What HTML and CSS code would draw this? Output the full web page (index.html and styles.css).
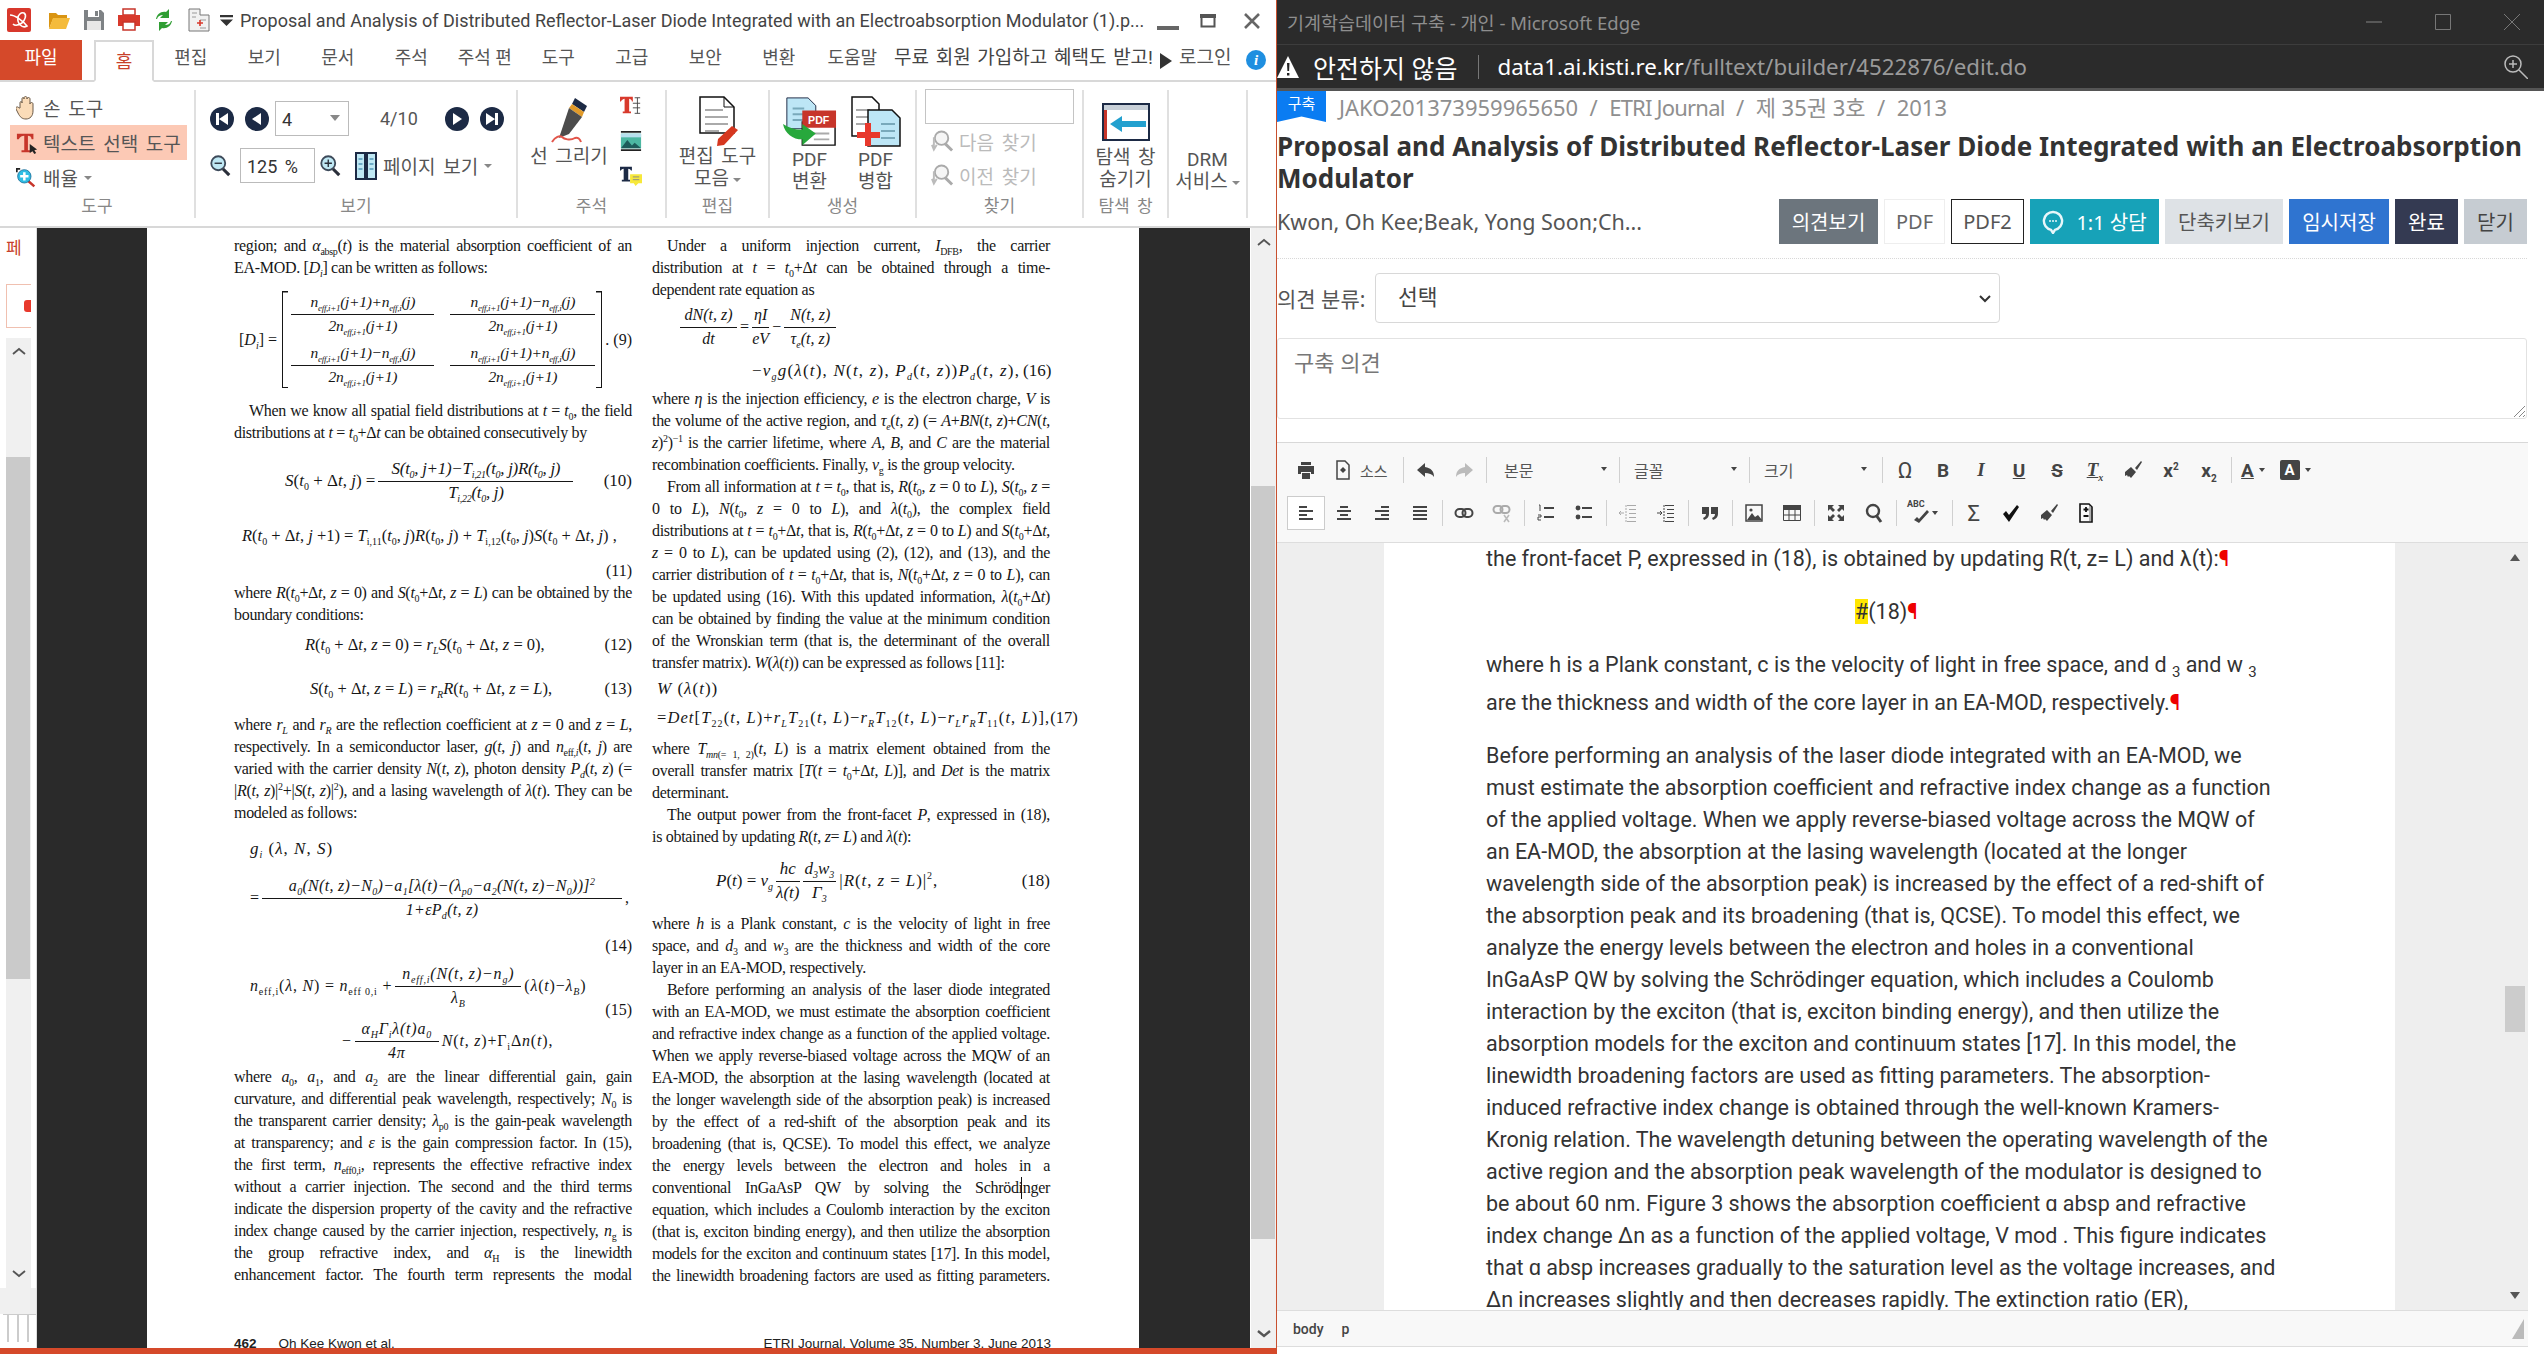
FILE: index.html
```html
<!DOCTYPE html>
<html lang="ko">
    <head>
        <meta charset="utf-8">
        <title>Proposal and Analysis of Distributed Reflector-Laser Diode</title>
        <link rel="stylesheet" href="styles.css">
    </head>
    <body>
        <svg class="defs">
            <symbol id="i-first" viewBox="0 0 24 24"><circle cx="12" cy="12" r="12" fill="#1c2a45"/><path d="M6 6h3v12H6zM18 6v12l-9-6z" fill="#fff"/></symbol>
            <symbol id="i-prev" viewBox="0 0 24 24"><circle cx="12" cy="12" r="12" fill="#1c2a45"/><path d="M16 6v12l-9-6z" fill="#fff"/></symbol>
            <symbol id="i-next" viewBox="0 0 24 24"><circle cx="12" cy="12" r="12" fill="#1c2a45"/><path d="M8 6v12l9-6z" fill="#fff"/></symbol>
            <symbol id="i-last" viewBox="0 0 24 24"><circle cx="12" cy="12" r="12" fill="#1c2a45"/><path d="M15 6h3v12h-3zM6 6v12l9-6z" fill="#fff"/></symbol>
            <symbol id="i-lens" viewBox="0 0 24 24"><path d="M14 15l7 7" stroke="#2a2f3a" stroke-width="3.4"/><circle cx="9" cy="9" r="7.6" fill="#bfe8f4" stroke="#3d4a5a" stroke-width="2"/></symbol>
            <symbol id="i-lens-out" viewBox="0 0 24 24"><use href="#i-lens"/><path d="M5 9h8" stroke="#2a2f3a" stroke-width="1.500"/></symbol>
            <symbol id="i-lens-in" viewBox="0 0 24 24"><use href="#i-lens"/><path d="M5 9h8M9 5v8" stroke="#2a2f3a" stroke-width="1.500"/></symbol>
            <symbol id="i-findg" viewBox="0 0 24 24"><path d="M15 15l7 7" stroke="#aaa" stroke-width="3"/><circle cx="11" cy="9" r="7" fill="#f5f5f5" stroke="#aaa" stroke-width="2"/><path d="M3 8v12M1 16l2 5 3-5" stroke="#bbb" stroke-width="2" fill="none"/></symbol>

            <symbol id="t-print" viewBox="0 0 20 20"><path d="M5 2h10v3H5zM2 6h16v8h-3v-2H5v2H2zM6 13h8v6H6z" fill="#444"/></symbol>
            <symbol id="t-src" viewBox="0 0 20 20"><path d="M4 1h8l4 4v14H4z" fill="none" stroke="#444" stroke-width="1.5"/><path d="M10 7l3 3-3 3-3-3z" fill="#444"/></symbol>
            <symbol id="t-undo" viewBox="0 0 20 20"><path d="M9 3L1 10l8 7v-4c4 0 7 1 9 4 0-6-3-9-9-10z" fill="#444"/></symbol>
            <symbol id="t-redo" viewBox="0 0 20 20"><path d="M11 3l8 7-8 7v-4c-4 0-7 1-9 4 0-6 3-9 9-10z" fill="#bbb"/></symbol>
            <symbol id="t-brush" viewBox="0 0 20 20"><path d="M12 8l6-7 1 1-5 8zM2 12l6-5 5 5-5 6-2-2-1 1-1-2-2 1z" fill="#444"/></symbol>
            <symbol id="t-left" viewBox="0 0 20 20"><path d="M3 3h8v2H3zM3 7h14v2H3zM3 11h8v2H3zM3 15h14v2H3z" fill="#444"/></symbol>
            <symbol id="t-center" viewBox="0 0 20 20"><path d="M6 3h8v2H6zM3 7h14v2H3zM6 11h8v2H6zM3 15h14v2H3z" fill="#444"/></symbol>
            <symbol id="t-right" viewBox="0 0 20 20"><path d="M9 3h8v2H9zM3 7h14v2H3zM9 11h8v2H9zM3 15h14v2H3z" fill="#444"/></symbol>
            <symbol id="t-just" viewBox="0 0 20 20"><path d="M3 3h14v2H3zM3 7h14v2H3zM3 11h14v2H3zM3 15h14v2H3z" fill="#444"/></symbol>
            <symbol id="t-link" viewBox="0 0 20 20"><rect x="1.5" y="6" width="10" height="8" rx="4" fill="none" stroke="#444" stroke-width="2"/><rect x="8.5" y="6" width="10" height="8" rx="4" fill="none" stroke="#444" stroke-width="2"/></symbol>
            <symbol id="t-unlink" viewBox="0 0 20 20"><rect x="1.5" y="3" width="9" height="7" rx="3.5" fill="none" stroke="#aaa" stroke-width="2"/><rect x="8.5" y="3" width="9" height="7" rx="3.5" fill="none" stroke="#aaa" stroke-width="2"/><path d="M12 12l5 7M17 12l-5 7" stroke="#bbb" stroke-width="1.6"/></symbol>
            <symbol id="t-ol" viewBox="0 0 20 20"><path d="M8 4h10v2H8zM8 13h10v2H8z" fill="#444"/><path d="M3 2h1v6M2 12h3v2H2v3h3" stroke="#444" fill="none"/></symbol>
            <symbol id="t-ul" viewBox="0 0 20 20"><circle cx="4" cy="5" r="2.4" fill="#444"/><circle cx="4" cy="14" r="2.4" fill="#444"/><path d="M8 4h10v2H8zM8 13h10v2H8z" fill="#444"/></symbol>
            <symbol id="t-out" viewBox="0 0 20 20"><path d="M9 2h9v1H9zM11 6h7v1h-7zM11 10h7v1h-7zM11 14h7v1h-7zM9 18h9v1H9z" fill="#aaa"/><path d="M8 2v17" stroke="#aaa" stroke-dasharray="2 1"/><path d="M1 10h5M3 8l-2 2 2 2" stroke="#aaa" fill="none"/></symbol>
            <symbol id="t-ind" viewBox="0 0 20 20"><path d="M9 2h9v1H9zM11 6h7v1h-7zM11 10h7v1h-7zM11 14h7v1h-7zM9 18h9v1H9z" fill="#444"/><path d="M8 2v17" stroke="#444" stroke-dasharray="2 1"/><path d="M1 10h5M4 8l2 2-2 2" stroke="#444" fill="none"/></symbol>
            <symbol id="t-quote" viewBox="0 0 20 20"><path d="M2 4h7v7c0 3-2 5-5 6l-1-2c2-1 3-2 3-4H2zM11 4h7v7c0 3-2 5-5 6l-1-2c2-1 3-2 3-4h-4z" fill="#444"/></symbol>
            <symbol id="t-img" viewBox="0 0 20 20"><rect x="2" y="2" width="16" height="16" fill="none" stroke="#444" stroke-width="1.5"/><path d="M3 17l5-7 3 4 3-2 4 5z" fill="#444"/><circle cx="7" cy="7" r="1.6" fill="#444"/></symbol>
            <symbol id="t-table" viewBox="0 0 20 20"><path d="M1 2h18v5H1z" fill="#444"/><path d="M1.500 2.500h17v15h-17zM1 12h18M7 7v11M13 7v11" fill="none" stroke="#444"/></symbol>
            <symbol id="t-max" viewBox="0 0 20 20"><path d="M2 2h6L6 4l3 3-2 2-3-3-2 2zM18 2v6l-2-2-3 3-2-2 3-3-2-2zM2 18v-6l2 2 3-3 2 2-3 3 2 2zM18 18h-6l2-2-3-3 2-2 3 3 2-2z" fill="#444"/></symbol>
            <symbol id="t-find" viewBox="0 0 20 20"><circle cx="9" cy="8" r="6" fill="none" stroke="#444" stroke-width="2.400"/><path d="M12 12l5 7" stroke="#444" stroke-width="3"/></symbol>
            <symbol id="t-check" viewBox="0 0 20 20"><path d="M2 11l3-3 3 4 8-10 2 2-10 15z" fill="#111"/></symbol>
            <symbol id="t-spell" viewBox="0 0 20 20"><path d="M4 17l3-3 2 2 8-9 2 2-10 11z" fill="#444"/></symbol>
            <symbol id="t-docpm" viewBox="0 0 20 20"><path d="M4 1h9l3 3v15H4z" fill="none" stroke="#111" stroke-width="1.6"/><path d="M10 4v5M7.500 6.500h5M7.500 13h5" stroke="#111" stroke-width="1.800"/><path d="M14 3v15" stroke="#999" stroke-width="1.500"/></symbol>
        </svg>

        <div class="desktop">
            <section class="pdf-win">
                <header class="pdf-title">
                    <svg class="ti-logo" viewBox="0 0 24 24"><rect width="24" height="24" rx="2" fill="#d8382c"/><path d="M3 7c5 0 13 6 17 11-5 3-10-3-9-8 0-3 3-6 6-5 3 2 1 7-2 10-3 2-7 3-9 1" fill="none" stroke="#fff" stroke-width="1.600"/></svg>
                    <svg class="ti-ic" viewBox="0 0 24 24"><path d="M2 5h7l2 2h9v4H6l-4 10z" fill="#d99412"/><path d="M6 10h17l-4 11H2z" fill="#f4bb3c"/></svg>
                    <svg class="ti-ic" viewBox="0 0 24 24"><path d="M2 2h17l3 3v17H2z" fill="#7e8285"/><path d="M6 2h11v7H6z" fill="#fff"/><path d="M13 3h3v5h-3z" fill="#7e8285"/><path d="M5 13h14v9H5z" fill="#e7e7e7"/></svg>
                    <svg class="ti-ic" viewBox="0 0 24 24"><path d="M6 1h12v6H6z" fill="#fff" stroke="#c7352a" stroke-width="1.500"/><path d="M1 7h22v11H1z" fill="#d8392c"/><path d="M6 14h12v8H6z" fill="#fff" stroke="#c7352a" stroke-width="1.500"/></svg>
                    <svg class="ti-ic" viewBox="0 0 24 24"><path d="M4 11c1-5 5-8 10-7l3-3v9h-9l3-3c-3 0-5 1-6 4z" fill="#2f9e33"/><path d="M20 13c-1 5-5 8-10 7l-3 3v-9h9l-3 3c3 0 5-1 6-4z" fill="#2f9e33"/></svg>
                    <svg class="ti-ic" viewBox="0 0 24 24"><path d="M2 1h11v6h9v16H2z" fill="#f1f1f1" stroke="#777"/><path d="M5 5h5M5 9h4M13 12h6M13 20h6" stroke="#999"/><path d="M10 15h6M13 12v6" stroke="#d8392c" stroke-width="1.600"/></svg>
                    <svg class="ti-drop" viewBox="0 0 12 12"><path d="M0 1h12v2H0zM0 5h12L6 11z" fill="#333"/></svg>
                    <span class="pdf-name">Proposal and Analysis of Distributed Reflector-Laser Diode Integrated with an Electroabsorption Modulator (1).p...</span>
                    <svg class="wc" viewBox="0 0 22 16"><path d="M0 11h22v4H0z" fill="#666"/></svg>
                    <svg class="wc wc-max" viewBox="0 0 16 14"><path d="M1.500 1.500h13v11h-13z" fill="none" stroke="#555" stroke-width="2"/><path d="M0 0h16v4H0z" fill="#555"/></svg>
                    <svg class="wc wc-close" viewBox="0 0 16 16"><path d="M1 1l14 14M15 1L1 15" stroke="#666" stroke-width="2.600"/></svg>
                </header>

                <nav class="tabs">
                    <span class="tab-file">파일</span>
                    <span class="tab-home">홈</span>
                    <span class="tab">편집</span>
                    <span class="tab">보기</span>
                    <span class="tab">문서</span>
                    <span class="tab">주석</span>
                    <span class="tab">주석 편</span>
                    <span class="tab">도구</span>
                    <span class="tab">고급</span>
                    <span class="tab">보안</span>
                    <span class="tab">변환</span>
                    <span class="tab">도움말</span>
                    <span class="promo">무료 회원 가입하고 혜택도 받고!</span>
                    <span class="promo-arrow"></span>
                    <span class="login">로그인</span>
                    <span class="info">i</span>
                </nav>

                <div class="ribbon">
                    <div class="group g-tools">
                        <div class="g-body">
                            <div class="tool">
                                <svg class="tool-ic" viewBox="0 0 20 24"><path d="M4 12V7c0-2 2-2 2 0V3c0-2 2-2 2 0V2c0-2 3-2 3 0v1c0-2 3-2 3 0v5c0-2 3-2 3 0v7c0 5-3 8-7 8s-6-2-8-6l-2-4c-1-2 2-3 3-1z" fill="#fbdcb8" stroke="#6b5a48"/></svg>
                                <span>손 도구</span>
                            </div>
                            <div class="tool tool-on">
                                <svg class="tool-ic tool-t" viewBox="0 0 24 24"><path d="M1 2h18v6h-2c0-3-2-4-4-4v16h3v2H6v-2h3V4C7 4 4 5 3 8H1z" fill="#c7352a"/><path d="M15 13l8 6-3 1 2 3-2 1-2-3-3 2z" fill="#222"/></svg>
                                <span>텍스트 선택 도구</span>
                            </div>
                            <div class="tool">
                                <svg class="tool-ic" viewBox="0 0 24 24"><path d="M0 0h5v2H2v3H0z" fill="#222"/><path d="M14 15l8 7" stroke="#c7352a" stroke-width="3"/><circle cx="10" cy="10" r="8" fill="#2fbde4" stroke="#1c6f9a"/><path d="M10 5v10M5 10h10" stroke="#fff" stroke-width="3"/></svg>
                                <span>배율</span><b class="caret"></b>
                            </div>
                        </div>
                        <span class="g-label">도구</span>
                    </div>

                    <div class="group g-view">
                        <div class="g-body">
                            <div class="view-row">
                                <svg class="nav-btn"><use href="#i-first"/></svg>
                                <svg class="nav-btn nb2"><use href="#i-prev"/></svg>
                                <span class="box box-page">4<b class="box-caret"></b></span>
                                <span class="count">4/10</span>
                                <svg class="nav-btn"><use href="#i-next"/></svg>
                                <svg class="nav-btn nb2"><use href="#i-last"/></svg>
                            </div>
                            <div class="view-row view-row2">
                                <svg class="zoom-ic"><use href="#i-lens-out"/></svg>
                                <span class="box box-zoom">125 %</span>
                                <svg class="zoom-ic zi2"><use href="#i-lens-in"/></svg>
                                <svg class="page-ic" viewBox="0 0 22 28"><path d="M1 1h9v26H1zM12 1h9v26h-9z" fill="#bfe8f4" stroke="#1c2a45" stroke-width="2"/><path d="M3.500 7h4M3.500 12h4M3.500 17h4M14.500 7h4M14.500 12h4M14.500 17h4" stroke="#1c6f9a"/></svg>
                                <span class="page-lb">페이지 보기</span><b class="caret"></b>
                            </div>
                        </div>
                        <span class="g-label">보기</span>
                    </div>

                    <div class="group g-note">
                        <div class="g-body note-body">
                            <div class="big big-pen">
                                <svg class="pen-ic" viewBox="0 0 40 50"><path d="M26 2l12 8-3 6-12-8z" fill="#1c2a45"/><path d="M23 8l12 8-2 5-13-9z" fill="#e09a2a"/><path d="M20 12l13 9-13 17-10 4z" fill="#4c4c4c"/><path d="M3 46c3-5 8-7 10-5s8 4 13 1c3-1 5 1 6 4" fill="none" stroke="#e2554a" stroke-width="2"/></svg>
                                <span>선 그리기</span>
                            </div>
                            <div class="note-side">
                                <svg viewBox="0 0 24 22"><path d="M0 1h14v5h-1c0-2-2-3-3-3v14h2v2H3v-2h2V3C4 3 2 4 1 6H0z" fill="#d8392c"/><path d="M16 2h6M19 2v17M16 19h6M14 8h8M14 13h8" stroke="#444" fill="none"/></svg>
                                <svg viewBox="0 0 24 24"><path d="M1 2h22M1 22h22" stroke="#222" stroke-width="2"/><path d="M1 4h22v16H1z" fill="#4cb7a2"/><path d="M1 20l7-9 5 6 3-3 7 6z" fill="#1d5c5a"/><path d="M1 4h22v4H1z" fill="#b7e0ee"/></svg>
                                <svg viewBox="0 0 24 24"><path d="M0 2h13v4h-1c0-1-2-2-3-2v12h2v2H2v-2h2V4C3 4 1 5 1 6H0z" fill="#1c2a45"/><path d="M11 10h13v10h-4l-3 3-2-3h-4z" fill="#f7e83a"/><path d="M14 13h7M14 16h7" stroke="#888"/></svg>
                            </div>
                        </div>
                        <span class="g-label">주석</span>
                    </div>

                    <div class="group g-edit">
                        <div class="g-body">
                            <div class="big">
                                <svg class="big-ic" viewBox="0 0 40 50"><path d="M2 1h24l10 10v26H2z" fill="#fff" stroke="#111" stroke-width="1.500"/><path d="M26 1v10h10" fill="none" stroke="#111"/><path d="M7 14h18M7 21h23M7 28h23M7 35h14" stroke="#aaa" stroke-width="2"/><path d="M34 30l6 4-14 15-7 1 1-7z" fill="#d6371f"/></svg>
                                <span>편집 도구</span>
                                <span>모음<b class="caret"></b></span>
                            </div>
                        </div>
                        <span class="g-label">편집</span>
                    </div>

                    <div class="group g-make">
                        <div class="g-body make-body">
                            <div class="big">
                                <svg class="big-ic wide" viewBox="0 0 56 52"><path d="M4 1h22l8 8v24H4z" fill="#bde6f6" stroke="#1c2a45"/><path d="M10 12h12M10 18h14M10 24h14" stroke="#79a9bb" stroke-width="2"/><path d="M20 26h34v24H20z" fill="#fff" stroke="#111" stroke-width="1.500"/><path d="M20 14h35v18H20z" fill="#c7352a"/><text class="pdf-tag" x="37" y="28" text-anchor="middle">PDF</text><path d="M30 38h18M32 44h16" stroke="#aaa" stroke-width="2"/><path d="M0 28c2 10 10 16 20 16v6l14-12-14-10v6c-8 0-14-2-20-6z" fill="#27a83c"/></svg>
                                <span>PDF</span>
                                <span>변환</span>
                            </div>
                            <div class="big">
                                <svg class="big-ic wide" viewBox="0 0 50 52"><path d="M1 1h20l7 7v32H1z" fill="#fff" stroke="#111" stroke-width="1.500"/><path d="M5 14h14M5 21h14M5 28h10" stroke="#aaa" stroke-width="2"/><path d="M17 14h24l8 8v28H17z" fill="#bde6f6" stroke="#111" stroke-width="1.500"/><path d="M30 28h14M30 35h14M30 42h14" stroke="#79a9bb" stroke-width="2"/><path d="M14 27h6v9h9v6h-9v8h-6v-8H6v-6h8z" fill="#e8382c"/></svg>
                                <span>PDF</span>
                                <span>병합</span>
                            </div>
                        </div>
                        <span class="g-label">생성</span>
                    </div>

                    <div class="group g-find">
                        <div class="g-body">
                            <div class="find-box"></div>
                            <div class="find-row"><svg><use href="#i-findg"/></svg><span>다음 찾기</span></div>
                            <div class="find-row"><svg><use href="#i-findg"/></svg><span>이전 찾기</span></div>
                        </div>
                        <span class="g-label">찾기</span>
                    </div>

                    <div class="group g-nav">
                        <div class="g-body">
                            <div class="big big-nav">
                                <svg class="nav-ic" viewBox="0 0 48 38"><path d="M1 1h46v36H1z" fill="#fff" stroke="#1c2a45" stroke-width="2"/><path d="M2 2h44v5H2z" fill="#c8d0d8"/><path d="M2 7h3v29H2z" fill="#c7352a"/><path d="M8 21l12-8v5h24v6H20v5z" fill="#22a0cf"/></svg>
                                <span>탐색 창</span>
                                <span>숨기기</span>
                            </div>
                        </div>
                        <span class="g-label">탐색 창</span>
                    </div>

                    <div class="group g-drm">
                        <div class="g-body">
                            <div class="big big-drm">
                                <span>DRM</span>
                                <span>서비스<b class="caret"></b></span>
                            </div>
                        </div>
                    </div>
                </div>

                <div class="pdf-body">
                    <aside class="side">
                        <span class="side-tab">페</span>
                        <span class="side-box"><i></i></span>
                        <div class="side-scroll">
                            <svg class="sb-arrow" viewBox="0 0 14 8"><path d="M1 7l6-5 6 5" fill="none" stroke="#555" stroke-width="1.800"/></svg>
                            <div class="side-thumb"></div>
                            <svg class="sb-arrow sb-down" viewBox="0 0 14 8"><path d="M1 1l6 5 6-5" fill="none" stroke="#555" stroke-width="1.800"/></svg>
                        </div>
                        <div class="side-foot"></div>
                        <div class="side-grip"></div>
                    </aside>

                    <div class="stage">
                        <article class="page">
                            <div class="cols">
                                <div class="col">
                                    <p class="ln">region; and <i>α</i><sub>absp</sub>(<i>t</i>) is the material absorption coefficient of an</p>
                                    <p class="ln e">EA-MOD. [<i>D<sub>i</sub></i>] can be written as follows:</p>

                                    <div class="eq eq9">
                                        <span class="eq9-l">[<i>D<sub>i</sub></i>] =</span>
                                        <div class="matrix">
                                            <span class="frac"><i class="num">n<sub>eff,i+1</sub>(j+1)+n<sub>eff,i</sub>(j)</i><i>2n<sub>eff,i+1</sub>(j+1)</i></span>
                                            <span class="frac"><i class="num">n<sub>eff,i+1</sub>(j+1)−n<sub>eff,i</sub>(j)</i><i>2n<sub>eff,i+1</sub>(j+1)</i></span>
                                            <span class="frac"><i class="num">n<sub>eff,i+1</sub>(j+1)−n<sub>eff,i</sub>(j)</i><i>2n<sub>eff,i+1</sub>(j+1)</i></span>
                                            <span class="frac"><i class="num">n<sub>eff,i+1</sub>(j+1)+n<sub>eff,i</sub>(j)</i><i>2n<sub>eff,i+1</sub>(j+1)</i></span>
                                        </div>
                                        <span class="eqno">. (9)</span>
                                    </div>

                                    <p class="ln pi">When we know all spatial field distributions at <i>t</i> = <i>t</i><sub>0</sub>, the field</p>
                                    <p class="ln e">distributions at <i>t</i> = <i>t</i><sub>0</sub>+Δ<i>t</i> can be obtained consecutively by</p>

                                    <div class="eq eq10">
                                        <span><i>S</i>(<i>t</i><sub>0</sub> + Δ<i>t</i>, <i>j</i>) =</span>
                                        <span class="frac frac10"><i class="num">S(t<sub>0</sub>, j+1)−T<sub>i,21</sub>(t<sub>0</sub>, j)R(t<sub>0</sub>, j)</i><i>T<sub>i,22</sub>(t<sub>0</sub>, j)</i></span>
                                        <span class="eqno">(10)</span>
                                    </div>
                                    <div class="eq eq11"><i>R</i>(<i>t</i><sub>0</sub> + Δ<i>t</i>, <i>j</i> +1) = <i>T</i><sub>i,11</sub>(<i>t</i><sub>0</sub>, <i>j</i>)<i>R</i>(<i>t</i><sub>0</sub>, <i>j</i>) + <i>T</i><sub>i,12</sub>(<i>t</i><sub>0</sub>, <i>j</i>)<i>S</i>(<i>t</i><sub>0</sub> + Δ<i>t</i>, <i>j</i>) ,</div>
                                    <p class="ln-no no11">(11)</p>
                                    <p class="ln">where <i>R</i>(<i>t</i><sub>0</sub>+Δ<i>t</i>, <i>z</i> = 0) and <i>S</i>(<i>t</i><sub>0</sub>+Δ<i>t</i>, <i>z</i> = <i>L</i>) can be obtained by the</p>
                                    <p class="ln e">boundary conditions:</p>

                                    <div class="eq eq12"><span><i>R</i>(<i>t</i><sub>0</sub> + Δ<i>t</i>, <i>z</i> = 0) = <i>r<sub>L</sub>S</i>(<i>t</i><sub>0</sub> + Δ<i>t</i>, <i>z</i> = 0),</span><span class="eqno">(12)</span></div>
                                    <div class="eq eq13"><span><i>S</i>(<i>t</i><sub>0</sub> + Δ<i>t</i>, <i>z</i> = <i>L</i>) = <i>r<sub>R</sub>R</i>(<i>t</i><sub>0</sub> + Δ<i>t</i>, <i>z</i> = <i>L</i>),</span><span class="eqno">(13)</span></div>

                                    <p class="ln">where <i>r<sub>L</sub></i> and <i>r<sub>R</sub></i> are the reflection coefficient at <i>z</i> = 0 and <i>z</i> = <i>L</i>,</p>
                                    <p class="ln">respectively. In a semiconductor laser, <i>g</i>(<i>t</i>, <i>j</i>) and <i>n</i><sub>eff,<i>i</i></sub>(<i>t</i>, <i>j</i>) are</p>
                                    <p class="ln">varied with the carrier density <i>N</i>(<i>t</i>, <i>z</i>), photon density <i>P<sub>d</sub></i>(<i>t</i>, <i>z</i>) (=</p>
                                    <p class="ln">|<i>R</i>(<i>t</i>, <i>z</i>)|<sup>2</sup>+|<i>S</i>(<i>t</i>, <i>z</i>)|<sup>2</sup>), and a lasing wavelength of <i>λ</i>(<i>t</i>). They can be</p>
                                    <p class="ln e">modeled as follows:</p>

                                    <div class="eq eq14a"><span><i>g<sub>i</sub></i> (<i>λ</i>, <i>N</i>, <i>S</i>)</span></div>
                                    <div class="eq eq14b"><span>=</span><span class="frac frac14"><i class="num">a<sub>0</sub>(N(t, z)−N<sub>0</sub>)−a<sub>1</sub>[λ(t)−(λ<sub>p0</sub>−a<sub>2</sub>(N(t, z)−N<sub>0</sub>))]<sup>2</sup></i><i>1+εP<sub>d</sub>(t, z)</i></span><span>,</span></div>
                                    <p class="ln-no no14">(14)</p>
                                    <div class="eq eq15"><span><i>n</i><sub>eff,i</sub>(<i>λ</i>, <i>N</i>) = <i>n</i><sub>eff 0,i</sub> +</span><span class="frac frac15"><i class="num">n<sub>eff,i</sub>(N(t, z)−n<sub>g</sub>)</i><i>λ<sub>B</sub></i></span><span>(<i>λ</i>(<i>t</i>)−<i>λ<sub>B</sub></i>)</span></div>
                                    <p class="ln-no no15">(15)</p>
                                    <div class="eq eq15b"><span>−</span><span class="frac frac15b"><i class="num">α<sub>H</sub>Γ<sub>i</sub>λ(t)a<sub>0</sub></i><i>4π</i></span><span><i>N</i>(<i>t</i>, <i>z</i>)+Γ<sub>i</sub>Δ<i>n</i>(<i>t</i>),</span></div>

                                    <p class="ln gap5">where <i>a</i><sub>0</sub>, <i>a</i><sub>1</sub>, and <i>a</i><sub>2</sub> are the linear differential gain, gain</p>
                                    <p class="ln">curvature, and differential peak wavelength, respectively; <i>N</i><sub>0</sub> is</p>
                                    <p class="ln">the transparent carrier density; <i>λ</i><sub>p0</sub> is the gain-peak wavelength</p>
                                    <p class="ln">at transparency; and <i>ε</i> is the gain compression factor. In (15),</p>
                                    <p class="ln">the first term, <i>n</i><sub>eff0,i</sub>, represents the effective refractive index</p>
                                    <p class="ln">without a carrier injection. The second and the third terms</p>
                                    <p class="ln">indicate the dispersion property of the cavity and the refractive</p>
                                    <p class="ln">index change caused by the carrier injection, respectively, <i>n</i><sub>g</sub> is</p>
                                    <p class="ln">the group refractive index, and <i>α</i><sub>H</sub> is the linewidth</p>
                                    <p class="ln">enhancement factor. The fourth term represents the modal</p>
                                </div>

                                <div class="col">
                                    <p class="ln pi">Under a uniform injection current, <i>I</i><sub>DFB</sub>, the carrier</p>
                                    <p class="ln">distribution at <i>t</i> = <i>t</i><sub>0</sub>+Δ<i>t</i> can be obtained through a time-</p>
                                    <p class="ln e">dependent rate equation as</p>

                                    <div class="eq eq16a">
                                        <span class="frac f57"><i class="num">dN(t, z)</i><i>dt</i></span>
                                        <span>=</span>
                                        <span class="frac"><i class="num">ηI</i><i>eV</i></span>
                                        <span>−</span>
                                        <span class="frac f50"><i class="num">N(t, z)</i><i>τ<sub>e</sub>(t, z)</i></span>
                                    </div>
                                    <div class="eq eq16b"><span>−<i>v<sub>g</sub>g</i>(<i>λ</i>(<i>t</i>), <i>N</i>(<i>t</i>, <i>z</i>), <i>P<sub>d</sub></i>(<i>t</i>, <i>z</i>))<i>P<sub>d</sub></i>(<i>t</i>, <i>z</i>),</span><span class="eqno">(16)</span></div>

                                    <p class="ln">where <i>η</i> is the injection efficiency, <i>e</i> is the electron charge, <i>V</i> is</p>
                                    <p class="ln">the volume of the active region, and <i>τ<sub>e</sub></i>(<i>t</i>, <i>z</i>) (= <i>A</i>+<i>BN</i>(<i>t</i>, <i>z</i>)+<i>CN</i>(<i>t</i>,</p>
                                    <p class="ln"><i>z</i>)<sup>2</sup>)<sup>−1</sup> is the carrier lifetime, where <i>A</i>, <i>B</i>, and <i>C</i> are the material</p>
                                    <p class="ln e">recombination coefficients. Finally, <i>v</i><sub>g</sub> is the group velocity.</p>
                                    <p class="ln pi">From all information at <i>t</i> = <i>t</i><sub>0</sub>, that is, <i>R</i>(<i>t</i><sub>0</sub>, <i>z</i> = 0 to <i>L</i>), <i>S</i>(<i>t</i><sub>0</sub>, <i>z</i> =</p>
                                    <p class="ln">0 to <i>L</i>), <i>N</i>(<i>t</i><sub>0</sub>, <i>z</i> = 0 to <i>L</i>), and <i>λ</i>(<i>t</i><sub>0</sub>), the complex field</p>
                                    <p class="ln">distributions at <i>t</i> = <i>t</i><sub>0</sub>+Δ<i>t</i>, that is, <i>R</i>(<i>t</i><sub>0</sub>+Δ<i>t</i>, <i>z</i> = 0 to <i>L</i>) and <i>S</i>(<i>t</i><sub>0</sub>+Δ<i>t</i>,</p>
                                    <p class="ln"><i>z</i> = 0 to <i>L</i>), can be updated using (2), (12), and (13), and the</p>
                                    <p class="ln">carrier distribution of <i>t</i> = <i>t</i><sub>0</sub>+Δ<i>t</i>, that is, <i>N</i>(<i>t</i><sub>0</sub>+Δ<i>t</i>, <i>z</i> = 0 to <i>L</i>), can</p>
                                    <p class="ln">be updated using (16). With this updated information, <i>λ</i>(<i>t</i><sub>0</sub>+Δ<i>t</i>)</p>
                                    <p class="ln">can be obtained by finding the value at the minimum condition</p>
                                    <p class="ln">of the Wronskian term (that is, the determinant of the overall</p>
                                    <p class="ln e">transfer matrix). <i>W</i>(<i>λ</i>(<i>t</i>)) can be expressed as follows [11]:</p>

                                    <div class="eq eq17a"><span><i>W</i> (<i>λ</i>(<i>t</i>))</span></div>
                                    <div class="eq eq17b"><span class="eq17t">=<i>Det</i>[<i>T</i><sub>22</sub>(<i>t</i>, <i>L</i>)+<i>r<sub>L</sub>T</i><sub>21</sub>(<i>t</i>, <i>L</i>)−<i>r<sub>R</sub>T</i><sub>12</sub>(<i>t</i>, <i>L</i>)−<i>r<sub>L</sub>r<sub>R</sub>T</i><sub>11</sub>(<i>t</i>, <i>L</i>)],</span><span class="eqno">(17)</span></div>

                                    <p class="ln gap6">where <i>T<sub>mn</sub></i><sub>(= 1, 2)</sub>(<i>t</i>, <i>L</i>) is a matrix element obtained from the</p>
                                    <p class="ln">overall transfer matrix [<i>T</i>(<i>t</i> = <i>t</i><sub>0</sub>+Δ<i>t</i>, <i>L</i>)], and <i>Det</i> is the matrix</p>
                                    <p class="ln e">determinant.</p>
                                    <p class="ln pi">The output power from the front-facet <i>P</i>, expressed in (18),</p>
                                    <p class="ln e">is obtained by updating <i>R</i>(<i>t</i>, <i>z</i>= <i>L</i>) and <i>λ</i>(<i>t</i>):</p>

                                    <div class="eq eq18">
                                        <span><i>P</i>(<i>t</i>) = <i>v<sub>g</sub></i></span>
                                        <span class="frac"><i class="num">hc</i><i>λ(t)</i></span>
                                        <span class="frac"><i class="num">d<sub>3</sub>w<sub>3</sub></i><i>Γ<sub>3</sub></i></span>
                                        <span class="eq18t">|<i>R</i>(<i>t</i>, <i>z</i> = <i>L</i>)|<sup>2</sup>,</span>
                                        <span class="eqno">(18)</span>
                                    </div>

                                    <p class="ln">where <i>h</i> is a Plank constant, <i>c</i> is the velocity of light in free</p>
                                    <p class="ln">space, and <i>d</i><sub>3</sub> and <i>w</i><sub>3</sub> are the thickness and width of the core</p>
                                    <p class="ln e">layer in an EA-MOD, respectively.</p>
                                    <p class="ln pi">Before performing an analysis of the laser diode integrated</p>
                                    <p class="ln">with an EA-MOD, we must estimate the absorption coefficient</p>
                                    <p class="ln">and refractive index change as a function of the applied voltage.</p>
                                    <p class="ln">When we apply reverse-biased voltage across the MQW of an</p>
                                    <p class="ln">EA-MOD, the absorption at the lasing wavelength (located at</p>
                                    <p class="ln">the longer wavelength side of the absorption peak) is increased</p>
                                    <p class="ln">by the effect of a red-shift of the absorption peak and its</p>
                                    <p class="ln">broadening (that is, QCSE). To model this effect, we analyze</p>
                                    <p class="ln">the energy levels between the electron and holes in a</p>
                                    <p class="ln caret-line">conventional InGaAsP QW by solving the Schrödinger<span class="ibeam"></span></p>
                                    <p class="ln">equation, which includes a Coulomb interaction by the exciton</p>
                                    <p class="ln">(that is, exciton binding energy), and then utilize the absorption</p>
                                    <p class="ln">models for the exciton and continuum states [17]. In this model,</p>
                                    <p class="ln">the linewidth broadening factors are used as fitting parameters.</p>
                                </div>
                            </div>
                            <footer class="page-foot">
                                <span><b>462</b><span class="foot-name">Oh Kee Kwon et al.</span></span>
                                <span>ETRI Journal, Volume 35, Number 3, June 2013</span>
                            </footer>
                        </article>
                    </div>

                    <div class="stage-scroll">
                        <svg class="sb-arrow" viewBox="0 0 14 8"><path d="M1 7l6-5 6 5" fill="none" stroke="#555" stroke-width="1.800"/></svg>
                        <div class="stage-thumb"></div>
                        <svg class="sb-arrow sb-down" viewBox="0 0 14 8"><path d="M1 1l6 5 6-5" fill="none" stroke="#555" stroke-width="2.400"/></svg>
                    </div>
                </div>
            </section>

            <section class="edge-win">
                <header class="edge-title">
                    <span>기계학습데이터 구축 - 개인 - Microsoft Edge</span>
                    <svg class="ec" viewBox="0 0 16 16"><path d="M0 8h16" stroke="#777" stroke-width="1.200"/></svg>
                    <svg class="ec ec2" viewBox="0 0 16 16"><path d="M.5.5h15v15H.5z" fill="none" stroke="#777"/></svg>
                    <svg class="ec ec3" viewBox="0 0 16 16"><path d="M0 0l16 16M16 0L0 16" stroke="#777"/></svg>
                </header>
                <div class="edge-addr">
                    <svg class="warn" viewBox="0 0 22 22"><path d="M11 0l11 22H0z" fill="#fff"/><path d="M10 7h2.500l-.4 8h-1.700zM10 17h2.400v2.400H10z" fill="#222"/></svg>
                    <span class="unsafe">안전하지 않음</span>
                    <span class="addr-sep"></span>
                    <span class="url">data1.ai.kisti.re.kr<span class="url-path">/fulltext/builder/4522876/edit.do</span></span>
                    <svg class="addr-zoom" viewBox="0 0 24 24"><circle cx="9" cy="9" r="8" fill="none" stroke="#bbb" stroke-width="1.500"/><path d="M15 15l9 9M5 9h8M9 5v8" stroke="#bbb" stroke-width="1.500"/></svg>
                </div>

                <main class="edge-page">
                    <div class="crumbs">
                        <span class="badge">구축</span>
                        <span class="crumb-text">JAKO201373959965650 &nbsp;/&nbsp; <span class="crumb-tight">ETRI Journal</span> &nbsp;/&nbsp; 제 35권 3호 &nbsp;/&nbsp; 2013</span>
                    </div>
                    <h1 class="doc-title">Proposal and Analysis of Distributed Reflector-Laser Diode Integrated with an Electroabsorption Modulator</h1>
                    <div class="doc-row">
                        <span class="authors">Kwon, Oh Kee;Beak, Yong Soon;Ch...</span>
                        <div class="btns">
                            <a class="btn b-grey">의견보기</a>
                            <a class="btn b-pdf">PDF</a>
                            <a class="btn b-pdf2">PDF2</a>
                            <a class="btn b-talk"><svg viewBox="0 0 22 24"><path d="M11 2a9 9 0 0 1 2 17.800L11 23l-2-3.200A9 9 0 0 1 11 2z" fill="none" stroke="#e8f7fa" stroke-width="2.400"/><path d="M7 11h2M10 11h2M13 11h2" stroke="#e8f7fa" stroke-width="1.600"/></svg>1:1 상담</a>
                            <a class="btn b-keys">단축키보기</a>
                            <a class="btn b-save">임시저장</a>
                            <a class="btn b-done">완료</a>
                            <a class="btn b-close">닫기</a>
                        </div>
                    </div>
                    <div class="form-row">
                        <label>의견 분류:</label>
                        <div class="select">선택<svg viewBox="0 0 12 8"><path d="M1 1l5 5 5-5" fill="none" stroke="#333" stroke-width="2"/></svg></div>
                    </div>
                    <div class="textarea">구축 의견<svg viewBox="0 0 12 12"><path d="M12 1L1 12M12 6l-6 6M12 10l-2 2" stroke="#888"/></svg></div>

                    <div class="editor">
                        <div class="toolbar">
                            <div class="tb-row">
                                <span class="tb"><svg><use href="#t-print"/></svg></span>
                                <span class="tb tb-src"><svg><use href="#t-src"/></svg><u>소스</u></span>
                                <span class="sep"></span>
                                <span class="tb"><svg><use href="#t-undo"/></svg></span>
                                <span class="tb"><svg><use href="#t-redo"/></svg></span>
                                <span class="sep"></span>
                                <span class="combo">본문<b></b></span>
                                <span class="sep sep0"></span>
                                <span class="combo">글꼴<b></b></span>
                                <span class="sep sep0"></span>
                                <span class="combo">크기<b></b></span>
                                <span class="sep"></span>
                                <span class="tb tx omega">Ω</span>
                                <span class="tb tx"><span>B</span></span>
                                <span class="tb tx ital"><span>I</span></span>
                                <span class="tb tx under"><span>U</span></span>
                                <span class="tb tx strike"><span>S</span></span>
                                <span class="tb tx ital under"><span>T<sub>x</sub></span></span>
                                <span class="tb"><svg><use href="#t-brush"/></svg></span>
                                <span class="tb tx"><span>x<sup>2</sup></span></span>
                                <span class="tb tx"><span>x<sub>2</sub></span></span>
                                <span class="sep"></span>
                                <span class="tb tb-color tx"><span class="under">A</span><b></b></span>
                                <span class="tb tb-color tx"><span class="abox">A</span><b></b></span>
                            </div>
                            <div class="tb-row tb-row2">
                                <span class="tb tb-on"><svg><use href="#t-left"/></svg></span>
                                <span class="tb"><svg><use href="#t-center"/></svg></span>
                                <span class="tb"><svg><use href="#t-right"/></svg></span>
                                <span class="tb"><svg><use href="#t-just"/></svg></span>
                                <span class="sep"></span>
                                <span class="tb"><svg><use href="#t-link"/></svg></span>
                                <span class="tb"><svg><use href="#t-unlink"/></svg></span>
                                <span class="sep"></span>
                                <span class="tb"><svg><use href="#t-ol"/></svg></span>
                                <span class="tb"><svg><use href="#t-ul"/></svg></span>
                                <span class="sep"></span>
                                <span class="tb"><svg><use href="#t-out"/></svg></span>
                                <span class="tb"><svg><use href="#t-ind"/></svg></span>
                                <span class="sep"></span>
                                <span class="tb"><svg><use href="#t-quote"/></svg></span>
                                <span class="sep"></span>
                                <span class="tb"><svg><use href="#t-img"/></svg></span>
                                <span class="tb"><svg><use href="#t-table"/></svg></span>
                                <span class="sep"></span>
                                <span class="tb"><svg><use href="#t-max"/></svg></span>
                                <span class="tb"><svg><use href="#t-find"/></svg></span>
                                <span class="sep"></span>
                                <span class="tb tb-spell"><small>ABC</small><svg><use href="#t-spell"/></svg><b></b></span>
                                <span class="sep"></span>
                                <span class="tb tx omega">Σ</span>
                                <span class="tb"><svg><use href="#t-check"/></svg></span>
                                <span class="tb"><svg><use href="#t-brush"/></svg></span>
                                <span class="tb"><svg><use href="#t-docpm"/></svg></span>
                            </div>
                        </div>
                        <div class="ed-area">
                            <div class="sheet">
                                <p class="s1">the front-facet P, expressed in (18), is obtained by updating R(t, z= L) and λ(t):<span class="pil">¶</span></p>
                                <p class="s2"><mark>#</mark>(18)<span class="pil">¶</span></p>
                                <p class="s3">where h is a Plank constant, c is the velocity of light in free space, and d <sub>3</sub> and w <sub>3</sub><br>are the thickness and width of the core layer in an EA-MOD, respectively.<span class="pil">¶</span></p>
                                <p class="s4">Before performing an analysis of the laser diode integrated with an EA-MOD, we<br>
                                must estimate the absorption coefficient and refractive index change as a function<br>
                                of the applied voltage. When we apply reverse-biased voltage across the MQW of<br>
                                an EA-MOD, the absorption at the lasing wavelength (located at the longer<br>
                                wavelength side of the absorption peak) is increased by the effect of a red-shift of<br>
                                the absorption peak and its broadening (that is, QCSE). To model this effect, we<br>
                                analyze the energy levels between the electron and holes in a conventional<br>
                                InGaAsP QW by solving the Schrödinger equation, which includes a Coulomb<br>
                                interaction by the exciton (that is, exciton binding energy), and then utilize the<br>
                                absorption models for the exciton and continuum states [17]. In this model, the<br>
                                linewidth broadening factors are used as fitting parameters. The absorption-<br>
                                induced refractive index change is obtained through the well-known Kramers-<br>
                                Kronig relation. The wavelength detuning between the operating wavelength of the<br>
                                active region and the absorption peak wavelength of the modulator is designed to<br>
                                be about 60 nm. Figure 3 shows the absorption coefficient ɑ absp and refractive<br>
                                index change Δn as a function of the applied voltage, V mod . This figure indicates<br>
                                that ɑ absp increases gradually to the saturation level as the voltage increases, and<br>
                                Δn increases slightly and then decreases rapidly. The extinction ratio (ER),</p>
                            </div>
                            <div class="ed-scroll">
                                <b class="tri-up"></b>
                                <div class="ed-thumb"></div>
                                <b class="tri-down"></b>
                            </div>
                        </div>
                        <div class="statusbar">
                            <span>body</span><span>p</span>
                            <svg viewBox="0 0 12 20"><path d="M12 0v20H0z" fill="#bbb"/></svg>
                        </div>
                    </div>
                </main>
            </section>
        </div>
    </body>
</html>
```

FILE: styles.css
```css
* {
    box-sizing: border-box;
}
html, body {
    margin: 0;
    padding: 0;
    height: 100%;
}
body {
    font-family: "Noto Sans", "Noto Sans CJK KR", sans-serif;
    overflow: hidden;
    background: #fff;
}
.defs {
    width: 0;
    height: 0;
    position: absolute;
}
svg {
    display: block;
    flex: none;
}
.desktop {
    display: flex;
    width: 2544px;
    height: 1354px;
}

/* left window - pdf reader */
.pdf-win {
    width: 1277px;
    height: 1354px;
    display: flex;
    flex-direction: column;
    border-right: 1px solid #c8502f;
    border-bottom: 6px solid #d5492a;
    background: #fff;
    color: #444;
    font-family: "Roboto", "Noto Sans CJK KR", sans-serif;
}
.pdf-title {
    height: 40px;
    display: flex;
    align-items: center;
    flex: none;
}
.ti-logo {
    width: 24px;
    height: 24px;
    margin-left: 7px;
    margin-right: 16px;
}
.ti-ic {
    width: 24px;
    height: 24px;
    margin-right: 11px;
}
.ti-drop {
    width: 13px;
    height: 13px;
    margin-left: -2px;
    margin-right: 7px;
}
.pdf-name {
    width: 904px;
    font-size: 18px;
    color: #444;
    white-space: nowrap;
}
.wc {
    width: 22px;
    height: 16px;
    margin-left: 13px;
    margin-top: 6px;
}
.wc-max {
    width: 16px;
    height: 14px;
    margin-left: 21px;
    margin-top: 2px;
}
.wc-close {
    width: 16px;
    height: 16px;
    margin-left: 28px;
    margin-top: 2px;
}

.tabs {
    height: 42px;
    flex: none;
    display: flex;
    align-items: flex-end;
    border-bottom: 2px solid #d8d8d8;
    font-size: 18px;
    color: #555;
}
.tab-file {
    width: 82px;
    height: 40px;
    background: #d5492a;
    color: #fff;
    text-align: center;
    line-height: 36px;
    margin-right: 12px;
}
.tab-home {
    width: 60px;
    height: 42px;
    margin-bottom: -2px;
    border: 2px solid #d8d8d8;
    border-bottom: 2px solid #fff;
    color: #c7402a;
    text-align: center;
    line-height: 40px;
}
.tab {
    width: 73.5px;
    height: 40px;
    text-align: center;
    line-height: 36px;
    white-space: nowrap;
}
.promo {
    white-space: nowrap;
    height: 40px;
    line-height: 36px;
    margin-left: 5px;
    color: #444;
    width: 266px;
    font-size: 19px;
    word-spacing: 2px;
}
.promo-arrow {
    width: 0;
    height: 0;
    border-left: 12px solid #333;
    border-top: 8px solid transparent;
    border-bottom: 8px solid transparent;
    margin-bottom: 11px;
}
.login {
    height: 40px;
    line-height: 36px;
    margin-left: 7px;
    width: 56px;
    font-size: 19px;
    white-space: nowrap;
}
.info {
    width: 20px;
    height: 20px;
    border-radius: 50%;
    background: #1f8fe0;
    color: #fff;
    font: italic bold 15px/20px "Liberation Serif", serif;
    text-align: center;
    margin-left: 11px;
    margin-bottom: 10px;
}

.ribbon {
    height: 146px;
    flex: none;
    display: flex;
    padding-top: 8px;
    border-bottom: 2px solid #d8d8d8;
    font-size: 19px;
    word-spacing: 3px;
    color: #555;
}
.group {
    display: flex;
    flex-direction: column;
    height: 128px;
    border-right: 2px solid #e0e0e0;
    flex: none;
}
.g-body {
    height: 104px;
}
.g-label {
    height: 24px;
    line-height: 24px;
    text-align: center;
    font-size: 17px;
    color: #888;
    white-space: nowrap;
}
.g-tools { width: 196px; }
.g-view { width: 322px; }
.g-note { width: 149px; }
.g-edit { width: 103px; }
.g-make { width: 147px; }
.g-find { width: 167px; }
.g-nav { width: 85px; }
.g-drm { width: 79px; }

.tool {
    height: 35px;
    margin: 0 7px 0 10px;
    padding-left: 6px;
    display: flex;
    align-items: center;
    white-space: nowrap;
}
.tool-on {
    background: #fcc9b5;
}
.tool-ic {
    width: 20px;
    height: 24px;
    margin-right: 7px;
}
.tool-t {
    width: 22px;
    margin-right: 5px;
}
.caret {
    display: inline-block;
    width: 0;
    height: 0;
    border-top: 4px solid #888;
    border-left: 4px solid transparent;
    border-right: 4px solid transparent;
    margin-left: 6px;
    vertical-align: middle;
}
.view-row {
    display: flex;
    align-items: center;
    height: 35px;
    margin-top: 11px;
    padding-left: 14px;
}
.view-row2 {
    margin-top: 12px;
}
.nav-btn {
    width: 24px;
    height: 24px;
}
.nb2 {
    margin-left: 11px;
}
.box {
    display: block;
    position: relative;
    height: 35px;
    border: 1px solid #bbb;
    font-size: 18px;
    color: #333;
    line-height: 36px;
    padding-left: 6px;
}
.box-page {
    width: 74px;
    margin-left: 6px;
}
.box-caret {
    position: absolute;
    right: 8px;
    top: 13px;
    width: 0;
    height: 0;
    border-top: 6px solid #888;
    border-left: 5px solid transparent;
    border-right: 5px solid transparent;
}
.count {
    width: 36px;
    margin: 0 29px 0 31px;
    font-size: 18px;
}
.zoom-ic {
    width: 22px;
    height: 24px;
}
.box-zoom {
    width: 75px;
    margin-left: 8px;
}
.zi2 {
    margin-left: 5px;
}
.page-ic {
    width: 22px;
    height: 28px;
    margin-left: 13px;
}
.page-lb {
    margin-left: 6px;
    white-space: nowrap;
}
.note-body {
    display: flex;
}
.big {
    display: flex;
    flex-direction: column;
    align-items: center;
    line-height: 22px;
    white-space: nowrap;
    padding-top: 6px;
}
.big .caret {
    margin-left: 4px;
}
.big-ic {
    width: 40px;
    height: 50px;
    margin-bottom: 0;
}
.big-ic.wide {
    width: 54px;
    height: 52px;
    margin-bottom: 1px;
}
.big-pen {
    width: 102px;
}
.pen-ic {
    width: 40px;
    height: 50px;
}
.note-side {
    display: flex;
    flex-direction: column;
    gap: 13px;
    padding-top: 5px;
}
.note-side svg {
    width: 22px;
    height: 22px;
}
.make-body {
    display: flex;
    justify-content: center;
    gap: 10px;
}
.make-body .big {
    width: 56px;
}
.pdf-tag {
    font: bold 11px "Liberation Sans", sans-serif;
    fill: #fff;
}
.find-box {
    width: 149px;
    height: 35px;
    margin: -1px 0 0 8px;
    border: 1px solid #c4c4c4;
}
.find-row {
    display: flex;
    align-items: center;
    height: 34px;
    margin-left: 14px;
    color: #bbb;
    white-space: nowrap;
}
.find-row svg {
    width: 23px;
    height: 24px;
    margin-right: 5px;
}
.big-nav {
    padding-top: 13px;
}
.nav-ic {
    width: 48px;
    height: 38px;
    margin-bottom: 6px;
}
.big-drm {
    padding-top: 59px;
}

.pdf-body {
    flex: 1;
    display: flex;
    min-height: 0;
    overflow: hidden;
}
.side {
    width: 37px;
    flex: none;
    display: flex;
    flex-direction: column;
    border-right: 1px solid #ddd;
}
.side-tab {
    height: 42px;
    padding-left: 6px;
    line-height: 40px;
    font-size: 17px;
    color: #c7402a;
}
.side-box {
    display: block;
    width: 25px;
    height: 44px;
    margin: 14px 0 10px 6px;
    border: 1px solid #f0c0b0;
    border-right: 0;
    position: relative;
}
.side-box i {
    position: absolute;
    right: 0;
    top: 15px;
    width: 7px;
    height: 12px;
    background: #e8392c;
    border-radius: 3px 0 0 3px;
}
.side-scroll {
    width: 25px;
    height: 950px;
    margin-left: 6px;
    background: #f0f0f0;
    display: flex;
    flex-direction: column;
    align-items: center;
}
.side-thumb {
    width: 24px;
    height: 522px;
    margin-top: 102px;
    margin-right: 1px;
    background: #cacaca;
}
.sb-arrow {
    width: 14px;
    height: 8px;
    margin-top: 9px;
}
.sb-down {
    margin-top: auto;
    margin-bottom: 10px;
}
.side-foot {
    height: 26px;
    background: #f0f0f0;
}
.side-grip {
    height: 28px;
    margin-left: 3px;
    border-top: 1px solid #ccc;
    background: repeating-linear-gradient(90deg, #fff 0 4px, #ccc 4px 6px, #fff 6px 10px);
}

.stage {
    width: 1213px;
    flex: none;
    background: #2a2a2a;
    padding-left: 110px;
}
.page {
    width: 992px;
    height: 100%;
    background: #fff;
    color: #161616;
    font-family: "Liberation Serif", serif;
    font-size: 16px;
    overflow: hidden;
}
.cols {
    display: flex;
    gap: 20px;
    padding: 7px 0 0 87px;
    height: 1060px;
}
.col {
    width: 398px;
    flex: none;
}
.ln {
    margin: 0;
    height: 22px;
    line-height: 22px;
    white-space: nowrap;
    text-align: justify;
    text-align-last: justify;
    letter-spacing: -0.3px;
}
.ln.e {
    text-align-last: left;
}
.pi {
    padding-left: 15px;
}
.page sub, .page sup {
    font-size: 10px;
    line-height: 0;
}
.ln-no {
    margin: 0;
    height: 22px;
    line-height: 22px;
    text-align: right;
}
.no11 { margin-top: 6px; }
.no14 { margin-top: 13px; }
.no15 { margin-top: -16px; }
.gap5 { margin-top: 5px; }
.gap6 { margin-top: 6px; }

.eq {
    display: flex;
    align-items: center;
    gap: 3px;
    white-space: nowrap;
}
.eqno {
    margin-left: auto;
}
.frac {
    display: inline-flex;
    flex-direction: column;
    align-items: center;
    text-align: center;
    line-height: 22px;
    flex: none;
}
.frac i {
    display: block;
}
.frac .num {
    align-self: stretch;
    border-bottom: 1px solid #161616;
    padding: 0 2px 1px;
}
.f57 { width: 57px; }
.f50 { width: 52px; }
.eq9 {
    height: 121px;
    padding-left: 5px;
}
.eq9-l {
    width: 43px;
}
.matrix {
    display: grid;
    grid-template-columns: 143px 145px;
    column-gap: 16px;
    row-gap: 5px;
    padding: 0 6px 0 8px;
    border-left: 1.5px solid #161616;
    border-right: 1.5px solid #161616;
    background:
        linear-gradient(#161616, #161616) left top / 5px 1.5px no-repeat,
        linear-gradient(#161616, #161616) left bottom / 5px 1.5px no-repeat,
        linear-gradient(#161616, #161616) right top / 5px 1.5px no-repeat,
        linear-gradient(#161616, #161616) right bottom / 5px 1.5px no-repeat;
    font-size: 15.5px;
    letter-spacing: -0.3px;
}
.matrix sub {
    font-size: 9px;
}
.eq10 {
    height: 74px;
    padding-left: 51px;
    font-size: 17px;
}
.frac10 {
    width: 195px;
    letter-spacing: -0.3px;
}
.eq11 {
    height: 36px;
    padding-left: 8px;
    display: block;
    line-height: 36px;
    font-size: 16.5px;
}
.eq12 {
    height: 38px;
    padding-left: 71px;
    font-size: 16.5px;
}
.eq13 {
    height: 50px;
    padding-left: 76px;
    font-size: 16.5px;
}
.eq14a {
    height: 50px;
    padding-left: 16px;
    font-size: 17px;
    letter-spacing: 1px;
}
.eq14b {
    height: 48px;
    padding-left: 16px;
}
.frac14 {
    width: 360px;
    font-size: 16px;
    letter-spacing: 0.3px;
}
.eq15 {
    height: 58px;
    padding-left: 16px;
    letter-spacing: 0.8px;
}
.frac15 {
    width: 126px;
}
.eq15b {
    height: 40px;
    padding-left: 108px;
    letter-spacing: 0.8px;
}
.frac15b {
    width: 84px;
}
.eq16a {
    height: 52px;
    padding-left: 28px;
}
.eq16b {
    height: 35px;
    padding-left: 100px;
    font-size: 17px;
}
.eq16b > span:first-child {
    letter-spacing: 1.2px;
}
.eq17a {
    height: 30px;
    padding-left: 5px;
    font-size: 17px;
    letter-spacing: 1px;
}
.eq17b {
    height: 28px;
    padding-left: 5px;
    gap: 0;
    font-size: 16.5px;
}
.eq17t {
    letter-spacing: 1.1px;
}
.eq18 {
    height: 65px;
    padding-left: 64px;
    font-size: 17px;
}
.eq18t {
    letter-spacing: 0.9px;
}
.caret-line {
    position: relative;
}
.ibeam {
    position: absolute;
    left: 369px;
    top: 0;
    width: 1px;
    height: 22px;
    background: #111;
}
.page-foot {
    display: flex;
    justify-content: space-between;
    width: 817px;
    margin-left: 87px;
    margin-top: 47px;
    font: 13.5px/18px "Liberation Sans", sans-serif;
    color: #222;
}
.foot-name {
    margin-left: 22px;
}

.stage-scroll {
    width: 25px;
    margin-left: 1px;
    background: #f0f0f0;
    display: flex;
    flex-direction: column;
    align-items: center;
}
.stage-thumb {
    width: 24px;
    height: 753px;
    margin-top: 240px;
    margin-right: 1px;
    background: #cacaca;
}
.stage-scroll .sb-arrow:first-child {
    margin-top: 10px;
}

/* right window - edge */
.edge-win {
    width: 1267px;
    height: 1354px;
    display: flex;
    flex-direction: column;
    font-family: "Noto Sans", "Noto Sans CJK KR", sans-serif;
}
.edge-title {
    height: 45px;
    flex: none;
    display: flex;
    align-items: center;
    padding-left: 10px;
    background: #2b2b2b;
    border-bottom: 1px solid #3d3d3d;
    color: #8e8e8e;
    font-size: 18.5px;
}
.ec {
    width: 16px;
    height: 16px;
    margin-left: 53px;
}
.edge-title .ec:first-of-type {
    margin-left: auto;
    margin-right: 0;
}
.ec3 {
    margin-right: 24px;
}
.edge-addr {
    height: 46px;
    flex: none;
    display: flex;
    align-items: center;
    background: #2b2b2b;
    border-bottom: 3px solid #555;
    color: #fff;
}
.warn {
    width: 22px;
    height: 22px;
}
.unsafe {
    margin-left: 14px;
    font-size: 25px;
    white-space: nowrap;
}
.addr-sep {
    width: 1px;
    height: 24px;
    background: #777;
    margin: 0 19px 0 20px;
}
.url {
    font-size: 22.3px;
    white-space: nowrap;
}
.url-path {
    color: #9a9a9a;
}
.addr-zoom {
    width: 24px;
    height: 24px;
    margin-left: auto;
    margin-right: 16px;
}
.edge-page {
    flex: 1;
    min-height: 0;
    display: flex;
    flex-direction: column;
    background: #fff;
    color: #333;
}
.crumbs {
    display: flex;
    height: 37px;
    flex: none;
}
.badge {
    width: 49px;
    height: 31px;
    background: #0a7cf2;
    color: #fff;
    font-size: 15px;
    text-align: center;
    line-height: 25px;
    clip-path: polygon(0 0, 100% 0, 100% 100%, 50% 82%, 0 100%);
}
.crumb-text {
    margin-left: 13px;
    color: #8f8f8f;
    font-size: 22px;
    line-height: 32px;
    white-space: nowrap;
}
.crumb-tight {
    letter-spacing: -0.8px;
}
.doc-title {
    margin: 2px 22px 0 0;
    font-size: 26px;
    line-height: 32px;
    font-weight: 700;
    color: #333;
    text-align: justify;
    height: 64px;
    flex: none;
}
.doc-row {
    display: flex;
    align-items: center;
    height: 45px;
    margin-top: 5px;
    padding-right: 17px;
    flex: none;
}
.authors {
    font-size: 21.5px;
    color: #555;
    white-space: nowrap;
}
.btns {
    margin-left: auto;
    display: flex;
    gap: 6px;
}
.btn {
    display: flex;
    align-items: center;
    justify-content: center;
    height: 45px;
    font-size: 20px;
    white-space: nowrap;
    color: #fff;
}
.b-grey { width: 99px; background: #6c757d; }
.b-pdf { width: 61px; border: 1px solid #eee; color: #666; }
.b-pdf2 { width: 73px; border: 1px solid #222; color: #555; }
.b-talk { width: 129px; background: #17a2b8; gap: 12px; }
.b-talk svg { width: 22px; height: 24px; }
.b-keys { width: 118px; background: #dee2e6; color: #555; }
.b-save { width: 100px; background: #2f74d0; }
.b-done { width: 63px; background: #343a52; }
.b-close { width: 63px; background: #c6ccd2; color: #444; }

.form-row {
    display: flex;
    align-items: center;
    height: 64px;
    margin: 14px 17px 0 0;
    padding-top: 14px;
    border-top: 1px dotted #d8d8d8;
    flex: none;
}
.form-row label {
    width: 98px;
    font-size: 21px;
    color: #555;
    white-space: nowrap;
}
.select {
    position: relative;
    width: 625px;
    height: 50px;
    padding-left: 22px;
    border: 1px solid #d8d8d8;
    border-radius: 4px;
    font-size: 21.5px;
    line-height: 46px;
    color: #444;
}
.select svg {
    position: absolute;
    right: 8px;
    top: 21px;
    width: 12px;
    height: 8px;
}
.textarea {
    position: relative;
    height: 81px;
    margin: 16px 17px 0 0;
    padding: 7px 16px;
    border: 1px solid #e2e2e2;
    border-radius: 3px;
    font-size: 22px;
    line-height: 32px;
    color: #777;
    flex: none;
}
.textarea svg {
    position: absolute;
    right: 1px;
    bottom: 1px;
    width: 12px;
    height: 12px;
}
.editor {
    flex: none;
    margin: 23px 16px 0 0;
    border-top: 1px solid #d8d8d8;
    font-family: "Roboto", "Noto Sans CJK KR", sans-serif;
}
.toolbar {
    height: 100px;
    background: #f8f8f8;
    padding: 8px 0 0 10px;
    border-bottom: 1px solid #ddd;
}
.tb-row {
    display: flex;
    align-items: center;
    height: 38px;
    color: #444;
}
.tb-row2 {
    margin-top: 5px;
}
.tb-row2 .sep {
    margin: 0 2.5px;
}
.tb-row2 .tb:nth-last-child(-n+4) {
    width: 37.5px;
}
.tb {
    width: 38px;
    height: 34px;
    flex: none;
    display: flex;
    align-items: center;
    justify-content: center;
}
.tb svg {
    width: 20px;
    height: 20px;
}
.tb-on {
    border: 1px solid #ccc;
    background: #fff;
}
.tb-src {
    width: 75px;
    gap: 7px;
    padding-left: 8px;
    justify-content: flex-start;
    font-size: 15px;
    color: #555;
}
.tb-src u {
    text-decoration: none;
    white-space: nowrap;
}
.sep {
    width: 1px;
    height: 26px;
    margin: 0 3px;
    background: #d0d0d0;
    flex: none;
}
.sep.sep0 {
    margin: 0;
}
.combo {
    width: 129px;
    padding-left: 14px;
    font-size: 16px;
    color: #555;
    position: relative;
    flex: none;
}
.combo b, .tb-color b, .tb-spell b {
    width: 0;
    height: 0;
    border-top: 4px solid #444;
    border-left: 3.5px solid transparent;
    border-right: 3.5px solid transparent;
}
.combo b {
    position: absolute;
    right: 12px;
    top: 9px;
}
.tx {
    font-size: 19px;
    font-weight: 700;
    color: #444;
}
.tx sup, .tx sub {
    font-size: 10px;
    line-height: 0;
}
.omega {
    font-size: 22px;
    font-weight: 400;
}
.ital {
    font-family: "Liberation Serif", serif;
    font-style: italic;
}
.under {
    text-decoration: underline;
}
.strike {
    text-decoration: line-through;
}
.tb-color {
    gap: 5px;
    width: 36px;
    margin-right: 6px;
}
.abox {
    background: #444;
    color: #fff;
    width: 20px;
    height: 20px;
    line-height: 20px;
    text-align: center;
    font-size: 15px;
    border-radius: 2px;
}
.tb-spell {
    position: relative;
    width: 50px;
    gap: 2px;
}
.tb-spell small {
    position: absolute;
    left: 8px;
    top: 3px;
    font-size: 9px;
    font-weight: 700;
}
.ed-area {
    height: 767px;
    display: flex;
    background: #eee;
    overflow: hidden;
}
.sheet {
    width: 1011px;
    margin-left: 107px;
    padding-left: 102px;
    background: #fff;
    color: #333;
    font-family: "Roboto", sans-serif;
    font-size: 21.5px;
    white-space: nowrap;
    flex: none;
}
.sheet p {
    margin: 0;
    line-height: 32px;
}
.sheet .s2 {
    margin-top: 21px;
    margin-left: 369px;
}
.sheet .s3 {
    margin-top: 18px;
    line-height: 38px;
}
.sheet .s4 {
    margin-top: 18px;
}
.sheet sub {
    font-size: 15px;
    line-height: 0;
}
.pil {
    color: #e00;
}
mark {
    background: #ffe600;
    color: #333;
}
.ed-scroll {
    margin-left: 107px;
    width: 26px;
    display: flex;
    flex-direction: column;
    align-items: center;
    flex: none;
}
.tri-up, .tri-down {
    width: 0;
    height: 0;
    border-left: 5px solid transparent;
    border-right: 5px solid transparent;
}
.tri-up {
    border-bottom: 7px solid #555;
    margin-top: 11px;
}
.tri-down {
    border-top: 7px solid #555;
    margin-top: auto;
    margin-bottom: 11px;
}
.ed-thumb {
    width: 20px;
    height: 46px;
    margin-top: 425px;
    background: #ccc;
}
.statusbar {
    height: 37px;
    display: flex;
    align-items: center;
    gap: 18px;
    padding-left: 16px;
    background: #f8f8f8;
    border-top: 1px solid #ddd;
    border-bottom: 1px solid #ddd;
    font-size: 14px;
    font-weight: 500;
    color: #444;
}
.statusbar svg {
    width: 12px;
    height: 20px;
    margin-left: auto;
    margin-right: 4px;
}
```
